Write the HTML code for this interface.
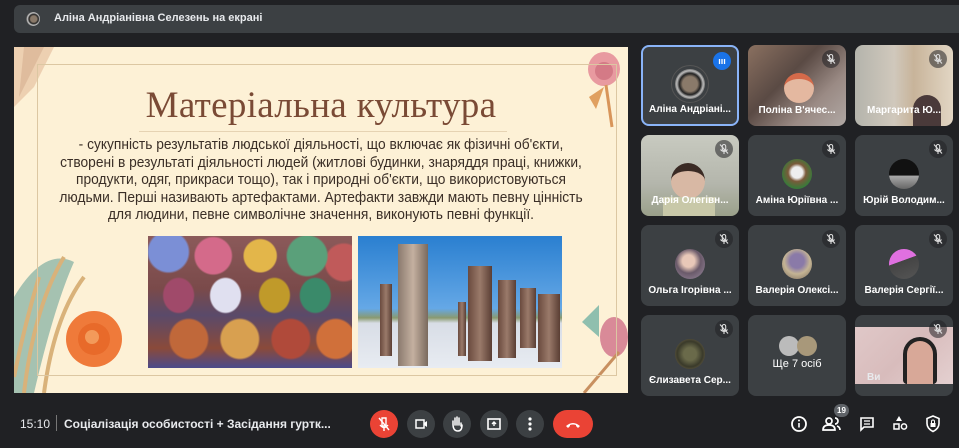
<!DOCTYPE html>
<html><head><meta charset="utf-8"><style>
*{margin:0;padding:0;box-sizing:border-box}
body{width:959px;height:448px;background:#202124;overflow:hidden;position:relative;font-family:"Liberation Sans","DejaVu Sans",sans-serif;color:#e8eaed}
.top{position:absolute;left:14px;top:5px;width:945px;height:28px;background:#3c4043;border-radius:6px 0 0 6px}
.top .av{position:absolute;left:12px;top:7px;width:14px;height:14px;border-radius:50%;background:radial-gradient(circle at 55% 50%,#8a7a6a 0 30%,#222 45%,#ccc 60%,#333 75%)}
.top span{position:absolute;left:40px;top:7px;font-size:11px;font-weight:bold;color:#e8eaed}
.slide{position:absolute;left:14px;top:47px;width:614px;height:346px;background:#fdf1d6;overflow:hidden}
.frame{position:absolute;left:23px;top:17px;width:580px;height:312px;border:1px solid #dcc7a2}
h1{position:absolute;left:0;width:614px;top:37px;text-align:center;font-family:"Liberation Serif","DejaVu Serif",serif;font-weight:normal;font-size:37px;color:#7a4a35;letter-spacing:0.3px}
.hr{position:absolute;left:125px;top:84px;width:368px;height:1px;background:#e6d3b3}
.txt{position:absolute;left:-100px;width:814px;top:90px;text-align:center;font-family:"Liberation Sans",sans-serif;font-size:14.5px;line-height:17.6px;color:#3a2e26;white-space:nowrap;transform:scaleX(0.95);transform-origin:50% 0}
.img1{position:absolute;left:134px;top:189px;width:204px;height:132px;background:
radial-gradient(circle at 10% 12%,#7b8fd6 0 9%,transparent 10%),radial-gradient(circle at 32% 15%,#d46a8a 0 10%,transparent 11%),radial-gradient(circle at 55% 15%,#e3b64a 0 10%,transparent 11%),radial-gradient(circle at 78% 15%,#5aa07a 0 10%,transparent 11%),radial-gradient(circle at 96% 20%,#c05a5a 0 8%,transparent 9%),
radial-gradient(ellipse 8% 14% at 15% 45%,#a04a6a 0 90%,transparent 100%),radial-gradient(ellipse 8% 14% at 38% 45%,#e0e0f0 0 90%,transparent 100%),radial-gradient(ellipse 8% 14% at 62% 45%,#c09a2a 0 90%,transparent 100%),radial-gradient(ellipse 8% 14% at 82% 45%,#3a8a6a 0 90%,transparent 100%),
radial-gradient(ellipse 10% 16% at 20% 78%,#c0683a 0 90%,transparent 100%),radial-gradient(ellipse 10% 16% at 45% 78%,#d8a050 0 90%,transparent 100%),radial-gradient(ellipse 10% 16% at 70% 78%,#b04a3a 0 90%,transparent 100%),radial-gradient(ellipse 10% 16% at 92% 78%,#d0703a 0 90%,transparent 100%),
linear-gradient(180deg,#8b5a5a 0%,#7a4a4a 40%,#5a4a6a 60%,#8a4a3a 85%,#4b4a8a 100%)}
.img2{position:absolute;left:344px;top:189px;width:204px;height:132px;background:linear-gradient(180deg,#2a7fd0 0%,#65a8e6 55%,#8a9a70 62%,#d8dde6 66%,#e8ecf2 100%)}
.col{position:absolute;background:linear-gradient(90deg,#6a4a3e,#9a7a6a,#5a3e34)}
.tile{position:absolute;width:98px;height:81px;background:#3c4043;border-radius:8px;overflow:hidden}
.tile .nm{position:absolute;left:0;right:0;bottom:10px;text-align:center;font-size:10px;font-weight:bold;color:#fff;white-space:nowrap}
.mic{position:absolute;right:6px;top:5px;width:18px;height:18px;border-radius:50%;background:rgba(32,33,36,.55)}
.ava{position:absolute;left:34px;top:24px;width:30px;height:30px;border-radius:50%}
.btn{position:absolute;top:410px;width:28px;height:28px;border-radius:14px;background:#3c4043}
.red{background:#ea4335}
.bb{position:absolute;font-size:11px;color:#e8eaed}
</style></head><body>
<svg width="0" height="0" style="position:absolute"><defs><g id="m"><rect x="7.3" y="4.5" width="3.4" height="6" rx="1.7" fill="none" stroke="#ddd" stroke-width="1.1"/><path d="M5.5 9.5q3.5 4 7 0M9 12v2M5 4.5l8 9" stroke="#ddd" stroke-width="1.1" fill="none"/></g></defs></svg>
<div class="top"><div class="av"></div><span>Аліна Андріанівна Селезень на екрані</span></div>

<div class="slide">
 <svg style="position:absolute;left:0;top:0" width="614" height="346">
  <path d="M0 0 L40 0 L20 40 L0 60Z" fill="#e8c8a8" opacity=".8"/>
  <path d="M10 0 L30 0 L5 50Z" fill="#d9b394" opacity=".7"/>
  <ellipse cx="590" cy="22" rx="16" ry="17" fill="#e89aa0"/><ellipse cx="590" cy="24" rx="9" ry="9" fill="#d47a86"/>
  <path d="M592 38 L598 80" stroke="#d8955a" stroke-width="3" fill="none"/>
  <path d="M575 50 L590 40 L582 62Z" fill="#e0a060"/>
  <path d="M0 250 Q30 200 60 215 Q40 260 20 346 L0 346Z" fill="#8fb6a8" opacity=".8"/>
  <path d="M10 346 Q20 260 50 210 M30 346 Q40 270 70 230 M0 330 Q10 280 25 230" stroke="#d9b27a" stroke-width="4" fill="none"/>
  <circle cx="80" cy="292" r="28" fill="#ef7a3a"/><circle cx="80" cy="292" r="16" fill="#e86a2a"/><circle cx="78" cy="290" r="7" fill="#f39a5a"/>
  <path d="M568 275 L585 258 L585 290Z" fill="#8fbfae"/>
  <ellipse cx="600" cy="290" rx="14" ry="20" fill="#d98a98"/>
  <path d="M570 346 L605 305" stroke="#c89060" stroke-width="3"/>
 </svg>
 <div class="frame"></div>
 <h1>Матеріальна культура</h1>
 <div class="hr"></div>
 <div class="txt">- сукупність результатів людської діяльності, що включає як фізичні об'єкти,<br>створені в результаті діяльності людей (житлові будинки, знаряддя праці, книжки,<br>продукти, одяг, прикраси тощо), так і природні об'єкти, що використовуються<br>людьми. Перші називають артефактами. Артефакти завжди мають певну цінність<br>для людини, певне символічне значення, виконують певні функції.</div>
 <div class="img1"></div>
 <div class="img2">
  <div class="col" style="left:22px;top:48px;width:12px;height:72px"></div>
  <div class="col" style="left:40px;top:8px;width:30px;height:122px;background:linear-gradient(90deg,#8a7a6e,#c4b0a0,#7a6a5e)"></div>
  <div class="col" style="left:100px;top:66px;width:8px;height:54px"></div>
  <div class="col" style="left:110px;top:30px;width:24px;height:95px"></div>
  <div class="col" style="left:140px;top:44px;width:18px;height:78px"></div>
  <div class="col" style="left:162px;top:52px;width:16px;height:60px"></div>
  <div class="col" style="left:180px;top:58px;width:22px;height:68px"></div>
 </div>
</div>

<div class="tile" style="left:641px;top:45px;border:2px solid #8ab4f8">
 <div style="position:absolute;left:28px;top:18px;width:38px;height:38px;border-radius:50%;border:1px solid #555"></div>
 <div class="ava" style="left:32px;top:22px;background:radial-gradient(circle at 50% 50%,#8a7a6a 0 35%,#222 50%,#bbb 62%,#333 80%)"></div>
 <div style="position:absolute;right:6px;top:5px;width:18px;height:18px;border-radius:50%;background:#1a73e8;color:#fff;font-size:9px;text-align:center;line-height:18px;font-weight:bold">ııı</div>
 <div class="nm" style="bottom:9px">Аліна Андріані...</div></div>
<div class="tile" style="left:748px;top:45px;background:linear-gradient(135deg,#8a7060,#5a4a44 40%,#9a8a84 70%,#b0a8a4)"><svg class="mic" viewBox="0 0 18 18"><use href="#m"/></svg>
 <div style="position:absolute;left:36px;top:28px;width:30px;height:30px;border-radius:50%;background:#e4b8a0;border-top:6px solid #d46a4a"></div><div class="nm">Поліна В'ячес...</div></div>
<div class="tile" style="left:855px;top:45px;background:linear-gradient(90deg,#b4b4ac,#d0c8bc 40%,#c8b49a 60%,#e2d6c4)"><svg class="mic" viewBox="0 0 18 18"><use href="#m"/></svg>
 <div style="position:absolute;left:58px;top:50px;width:28px;height:31px;border-radius:14px 14px 0 0;background:#4a3a3a"></div><div class="nm">Маргарита Ю...</div></div>

<div class="tile" style="left:641px;top:135px;background:linear-gradient(180deg,#c8cac0,#b4b6ac 60%,#9aa08a)"><svg class="mic" viewBox="0 0 18 18"><use href="#m"/></svg>
 <div style="position:absolute;left:30px;top:28px;width:34px;height:36px;border-radius:50%;background:#d8b8a4;border-top:8px solid #3a2a24"></div>
 <div style="position:absolute;left:22px;top:62px;width:52px;height:20px;background:#c8c8a8"></div><div class="nm">Дарія Олегівн...</div></div>
<div class="tile" style="left:748px;top:135px"><svg class="mic" viewBox="0 0 18 18"><use href="#m"/></svg><div class="ava" style="background:radial-gradient(circle at 50% 45%,#eee 0 25%,#7a5a3a 40%,#3a7a3a 70%)"></div><div class="nm">Аміна Юріївна ...</div></div>
<div class="tile" style="left:855px;top:135px"><svg class="mic" viewBox="0 0 18 18"><use href="#m"/></svg><div class="ava" style="background:linear-gradient(180deg,#111 0 55%,#aaa 56%,#666)"></div><div class="nm">Юрій Володим...</div></div>

<div class="tile" style="left:641px;top:225px"><svg class="mic" viewBox="0 0 18 18"><use href="#m"/></svg><div class="ava" style="background:radial-gradient(circle at 45% 40%,#e8c8b8 0 25%,#6a5a6a 50%,#9a8aa0)"></div><div class="nm">Ольга Ігорівна ...</div></div>
<div class="tile" style="left:748px;top:225px"><svg class="mic" viewBox="0 0 18 18"><use href="#m"/></svg><div class="ava" style="background:radial-gradient(circle at 50% 40%,#8a7aa8 0 30%,#c4b494 55%,#7a6a5a)"></div><div class="nm">Валерія Олексі...</div></div>
<div class="tile" style="left:855px;top:225px"><svg class="mic" viewBox="0 0 18 18"><use href="#m"/></svg><div class="ava" style="background:linear-gradient(160deg,#e070e0 0 40%,#444 41%,#555)"></div><div class="nm">Валерія Сергії...</div></div>

<div class="tile" style="left:641px;top:315px"><svg class="mic" viewBox="0 0 18 18"><use href="#m"/></svg><div class="ava" style="background:radial-gradient(circle at 50% 50%,#6a6a4a 0 30%,#3a3a2a 60%,#8a7a5a)"></div><div class="nm">Єлизавета Сер...</div></div>
<div class="tile" style="left:748px;top:315px">
 <div style="position:absolute;left:31px;top:21px;width:20px;height:20px;border-radius:50%;background:#bbb"></div>
 <div style="position:absolute;left:49px;top:21px;width:20px;height:20px;border-radius:50%;background:#a8987a"></div>
 <div class="nm" style="bottom:26px;font-weight:normal;font-size:11px">Ще 7 осіб</div></div>
<div class="tile" style="left:855px;top:315px">
 <div style="position:absolute;left:0;top:12px;width:98px;height:57px;background:linear-gradient(135deg,#e0c8c8,#d8bcbc 50%,#e4d0d0)"></div>
 <div style="position:absolute;left:48px;top:22px;width:34px;height:47px;border-radius:17px 17px 4px 4px;background:#d8a898;border:4px solid #222;border-bottom:none"></div>
 <svg class="mic" viewBox="0 0 18 18"><use href="#m"/></svg><div style="position:absolute;left:12px;top:57px;font-size:10px;font-weight:bold">Ви</div></div>

<div class="bb" style="left:20px;top:417px;font-size:12px">15:10</div>
<div style="position:absolute;left:56px;top:415px;width:1px;height:16px;background:#777"></div>
<div class="bb" style="left:64px;top:417px;font-size:12px;font-weight:bold">Соціалізація особистості + Засідання гуртк...</div>

<div class="btn red" style="left:370px"><svg width="28" height="28"><path d="M12 8h4v8h-4z" fill="none" stroke="#fff" stroke-width="1.4"/><path d="M10 15q4 5 8 0M14 18v3M9 8l10 12" stroke="#fff" stroke-width="1.4" fill="none"/></svg></div>
<div class="btn" style="left:407px"><svg width="28" height="28"><rect x="9" y="10" width="8" height="8" fill="none" stroke="#fff" stroke-width="1.5"/><path d="M17 13l3-2v6l-3-2z" fill="#fff"/></svg></div>
<div class="btn" style="left:443px"><svg width="28" height="28"><path d="M10 15v-4M12 15V8M14 15V7M16 15V8M18 16v-3M10 14q0 7 5 7q4 0 4-6" stroke="#fff" stroke-width="1.5" fill="none" stroke-linecap="round"/></svg></div>
<div class="btn" style="left:480px"><svg width="28" height="28"><rect x="8" y="9" width="12" height="10" fill="none" stroke="#fff" stroke-width="1.6"/><path d="M14 16v-4M12 14l2-2 2 2" stroke="#fff" stroke-width="1.4" fill="none"/></svg></div>
<div class="btn" style="left:516px"><svg width="28" height="28"><circle cx="14" cy="9" r="1.6" fill="#fff"/><circle cx="14" cy="14" r="1.6" fill="#fff"/><circle cx="14" cy="19" r="1.6" fill="#fff"/></svg></div>
<div class="btn red" style="left:553px;width:40px"><svg width="40" height="28"><path d="M13 16q7-6 14 0l-2 2-2-2v-1q-3-1-6 0v1l-2 2z" fill="#fff"/></svg></div>

<svg style="position:absolute;left:788px;top:410px" width="160" height="28">
 <circle cx="11" cy="14" r="7" fill="none" stroke="#fff" stroke-width="1.8"/><rect x="10.2" y="13" width="1.6" height="4.5" fill="#fff"/><circle cx="11" cy="10.5" r="1" fill="#fff"/>
 <circle cx="41" cy="11" r="3" fill="none" stroke="#fff" stroke-width="1.7"/><path d="M35 20q0-5 6-5q6 0 6 5z" fill="none" stroke="#fff" stroke-width="1.7"/><path d="M47 8a3 3 0 0 1 0 6M49 16q3 1 3 4" stroke="#fff" stroke-width="1.7" fill="none"/>
 <path d="M73 8h12v9h-9l-3 3z" fill="none" stroke="#fff" stroke-width="1.6"/><path d="M76 11h6M76 14h6" stroke="#fff" stroke-width="1.2"/>
 <path d="M111 6l3 5h-6z" fill="#fff"/><rect x="106" y="14" width="5" height="5" fill="none" stroke="#fff" stroke-width="1.5"/><circle cx="116" cy="16.5" r="2.6" fill="none" stroke="#fff" stroke-width="1.5"/>
 <path d="M145 6l6 2.5v5q0 5-6 8q-6-3-6-8v-5z" fill="none" stroke="#fff" stroke-width="1.6"/><rect x="142.5" y="13" width="5" height="4" fill="#fff"/><path d="M143.5 13v-1.5a1.5 1.5 0 0 1 3 0V13" stroke="#fff" fill="none"/>
</svg>
<div style="position:absolute;left:834px;top:404px;width:15px;height:13px;border-radius:7px;background:#5f6368;font-size:8px;font-weight:bold;text-align:center;line-height:13px;color:#fff">19</div>
</body></html>
